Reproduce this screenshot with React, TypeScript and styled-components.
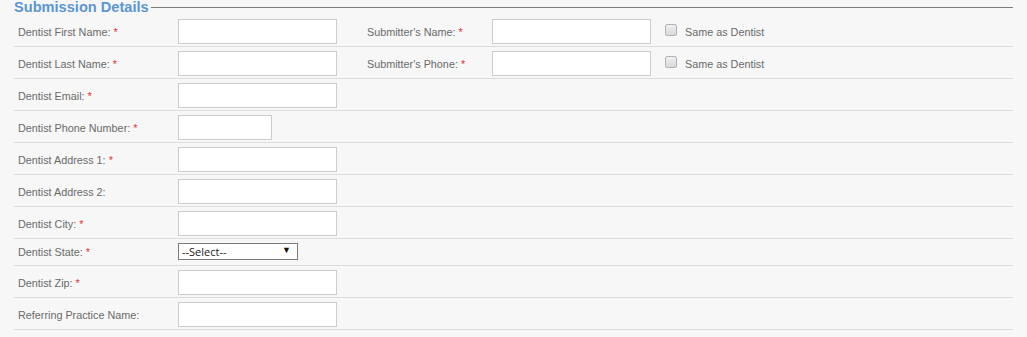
import React from "react";
import styled, { createGlobalStyle } from "styled-components";

const Global = createGlobalStyle`
  html, body { margin: 0; padding: 0; background: #f7f7f7; }
  body { font-family: "Liberation Sans", Arial, sans-serif; }
`;

const Page = styled.div`
  width: 1027px;
  height: 337px;
  background: #f7f7f7;
  padding-left: 14px;
  box-sizing: border-box;
  overflow: hidden;
`;

const Fieldset = styled.div`
  width: 999px;
  display: flex;
  flex-direction: column;
`;

const Legend = styled.div`
  display: flex;
  align-items: center;
  height: 15px;
`;

const LegendText = styled.span`
  font-family: "Liberation Sans", Arial, sans-serif;
  font-weight: bold;
  font-size: 14.6px;
  color: #5b96d2;
  line-height: 15px;
  margin-top: -1px;
`;

const LegendLine = styled.span`
  flex: 1;
  height: 1px;
  background: #7d7d7d;
  margin-left: 2px;
  margin-top: -1px;
`;

const Row = styled.div<{ $compact?: boolean }>`
  display: flex;
  align-items: center;
  height: ${(p) => (p.$compact ? 27 : 32)}px;
  box-sizing: border-box;
  padding: ${(p) => (p.$compact ? "4px 0 6px 4px" : "4px 0 3px 4px")};
  border-bottom: 1px solid #dcdcdc;
`;

const Label = styled.label<{ $width: number }>`
  width: ${(p) => p.$width}px;
  flex: none;
  font-size: 10.8px;
  color: #6a6a6a;
  margin-top: 2px;
`;

const Req = styled.span`
  color: #e03030;
  margin-left: 3px;
`;

const TextInput = styled.input<{ $width?: number }>`
  width: ${(p) => p.$width ?? 159}px;
  height: 25px;
  box-sizing: border-box;
  border: 1px solid #cccccc;
  background: #ffffff;
  padding: 0 4px;
  margin: 0;
  flex: none;
  outline: none;
`;

const Second = styled.div`
  display: flex;
  align-items: center;
  margin-left: 30px;
`;

const Check = styled.span`
  width: 12px;
  height: 12px;
  box-sizing: border-box;
  border: 1px solid #b4b4b4;
  border-radius: 2px;
  background: linear-gradient(#f0f0f0, #d8d8d8);
  margin-left: 14px;
  margin-bottom: 3px;
  flex: none;
`;

const CheckText = styled.span`
  font-size: 10.8px;
  color: #6a6a6a;
  margin-left: 8px;
  margin-top: 2px;
`;

const SelectWrap = styled.div`
  position: relative;
  width: 120px;
  height: 17px;
  margin-bottom: 1px;
`;

const Select = styled.select`
  appearance: none;
  -webkit-appearance: none;
  width: 120px;
  height: 17px;
  box-sizing: border-box;
  border: 1px solid #7a7a7a;
  background: #ffffff;
  font-family: "Open Sans", "Liberation Sans", Arial, sans-serif;
  font-size: 11px;
  color: #222;
  padding: 0 0 0 3px;
  margin: 0;
  line-height: 15px;
  outline: none;
  border-radius: 0;
`;

const Arrow = styled.span`
  position: absolute;
  right: 7px;
  top: 0;
  font-size: 9px;
  line-height: 17px;
  color: #111;
  pointer-events: none;
`;

type Field = {
  label: string;
  req?: boolean;
  width?: number;
  select?: boolean;
  second?: string;
};

const fields: Field[] = [
  { label: "Dentist First Name:", req: true, second: "Submitter's Name:" },
  { label: "Dentist Last Name:", req: true, second: "Submitter's Phone:" },
  { label: "Dentist Email:", req: true },
  { label: "Dentist Phone Number:", req: true, width: 94 },
  { label: "Dentist Address 1:", req: true },
  { label: "Dentist Address 2:" },
  { label: "Dentist City:", req: true },
  { label: "Dentist State:", req: true, select: true },
  { label: "Dentist Zip:", req: true },
  { label: "Referring Practice Name:" },
];

export default function App() {
  return (
    <>
      <Global />
      <Page>
        <Fieldset>
          <Legend>
            <LegendText>Submission Details</LegendText>
            <LegendLine />
          </Legend>
          {fields.map((f) => (
            <Row key={f.label} $compact={f.select}>
              <Label $width={160}>
                {f.label}
                {f.req && <Req>*</Req>}
              </Label>
              {f.select ? (
                <SelectWrap>
                  <Select defaultValue="">
                    <option value="">--Select--</option>
                  </Select>
                  <Arrow>▼</Arrow>
                </SelectWrap>
              ) : (
                <TextInput type="text" $width={f.width} />
              )}
              {f.second && (
                <Second>
                  <Label $width={125}>
                    {f.second}
                    <Req>*</Req>
                  </Label>
                  <TextInput type="text" />
                  <Check />
                  <CheckText>Same as Dentist</CheckText>
                </Second>
              )}
            </Row>
          ))}
        </Fieldset>
      </Page>
    </>
  );
}
